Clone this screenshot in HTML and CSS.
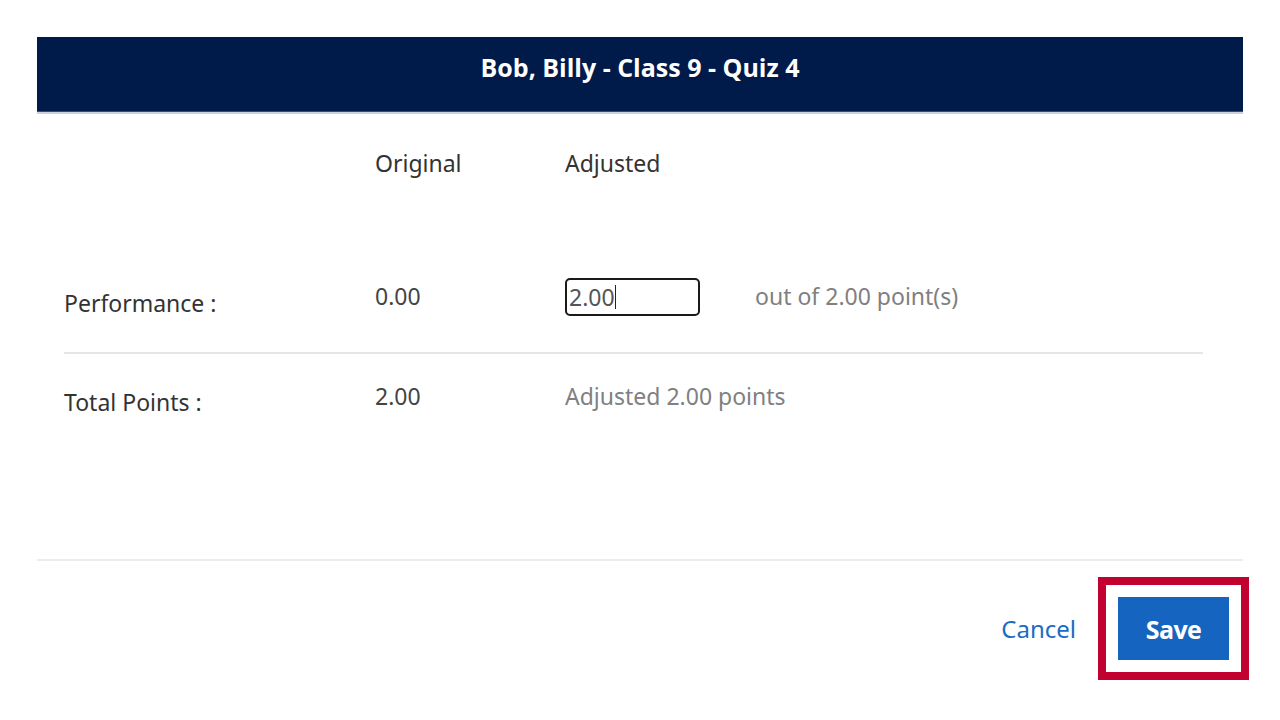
FILE: index.html
```html
<!DOCTYPE html>
<html lang="en">
<head>
<meta charset="utf-8">
<title>Adjust Grade</title>
<link rel="stylesheet" href="styles.css">
</head>
<body>
<div class="page">
  <div class="dialog">
    <div class="dialog-header">
      <h1 class="dialog-title">Bob, Billy - Class 9 - Quiz 4</h1>
    </div>
    <div class="dialog-body">
      <div class="grid head-row">
        <div></div>
        <div class="col-title">Original</div>
        <div class="col-title">Adjusted</div>
        <div></div>
      </div>
      <div class="grid perf-row">
        <div class="label">Performance :</div>
        <div class="value">0.00</div>
        <div class="field"><span class="field-text">2.00</span><span class="caret"></span></div>
        <div class="muted out-of">out of 2.00 point(s)</div>
      </div>
      <div class="divider"></div>
      <div class="grid total-row">
        <div class="label">Total Points :</div>
        <div class="value">2.00</div>
        <div class="muted adjusted">Adjusted 2.00 points</div>
        <div></div>
      </div>
    </div>
    <div class="dialog-footer">
      <a class="btn-link" href="#">Cancel</a>
      <button class="btn-primary highlighted" type="button">Save</button>
    </div>
  </div>
</div>
</body>
</html>
```
FILE: styles.css
```css
html, body {
  margin: 0;
  padding: 0;
  background: #ffffff;
}
body {
  font-family: "Noto Sans", "Open Sans", sans-serif;
  color: #3a3a3a;
}
.page {
  padding: 37px 37px 0 37px;
}
.dialog {
  display: flex;
  flex-direction: column;
}
.dialog-header {
  height: 74px;
  background: #001a4a;
  border-bottom: 1px solid #3a4c7a;
  box-shadow: 0 2px 0 #cdd3de;
  display: flex;
  align-items: center;
  justify-content: center;
}
.dialog-title {
  margin: 0;
  color: #ffffff;
  font-family: "Open Sans", sans-serif;
  font-weight: 700;
  font-size: 25px;
  letter-spacing: 0;
  padding-bottom: 14px;
}
.dialog-body {
  padding: 0 40px 0 27px;
  height: 447px;
}
.grid {
  display: grid;
  grid-template-columns: 311px 190px 190px 1fr;
  align-items: start;
  font-size: 23px;
  line-height: 28px;
  white-space: nowrap;
}
.head-row {
  margin-top: 37px;
  height: 121px;
}
.col-title {
  color: #333333;
}
.perf-row {
  padding-top: 8px;
  height: 74px;
}
.label {
  color: #333333;
  margin-top: 11px;
}
.value {
  color: #444444;
  margin-top: 4px;
}
.field {
  width: 129px;
  height: 34px;
  border: 2px solid #1a1a1a;
  border-radius: 5px;
  display: flex;
  align-items: center;
  padding-left: 2px;
  color: #555555;
}
.caret {
  width: 1px;
  height: 24px;
  background: #222222;
}
.muted {
  color: #808080;
}
.out-of {
  margin-top: 4px;
}
.divider {
  height: 2px;
  background: #e6e6e6;
}
.total-row {
  padding-top: 28px;
}
.total-row .label {
  margin-top: 6px;
}
.total-row .value {
  margin-top: 0;
}
.dialog-footer {
  border-top: 2px solid #ececec;
  display: flex;
  justify-content: flex-end;
  align-items: center;
  gap: 42px;
  padding: 36px 14px 60px 0;
}
.btn-link {
  color: #1a6cc4;
  text-decoration: none;
  font-size: 24px;
  font-family: "Noto Sans", sans-serif;
}
.btn-primary {
  width: 111px;
  height: 63px;
  background: #1565c0;
  border: none;
  border-radius: 0;
  color: #ffffff;
  font-family: "Open Sans", sans-serif;
  font-weight: 700;
  font-size: 25px;
  letter-spacing: -0.6px;
  padding: 0;
}
.highlighted {
  position: relative;
}
.highlighted::after {
  content: "";
  position: absolute;
  top: -20px;
  left: -20px;
  right: -20px;
  bottom: -20px;
  border: 8px solid #c10230;
}
```
